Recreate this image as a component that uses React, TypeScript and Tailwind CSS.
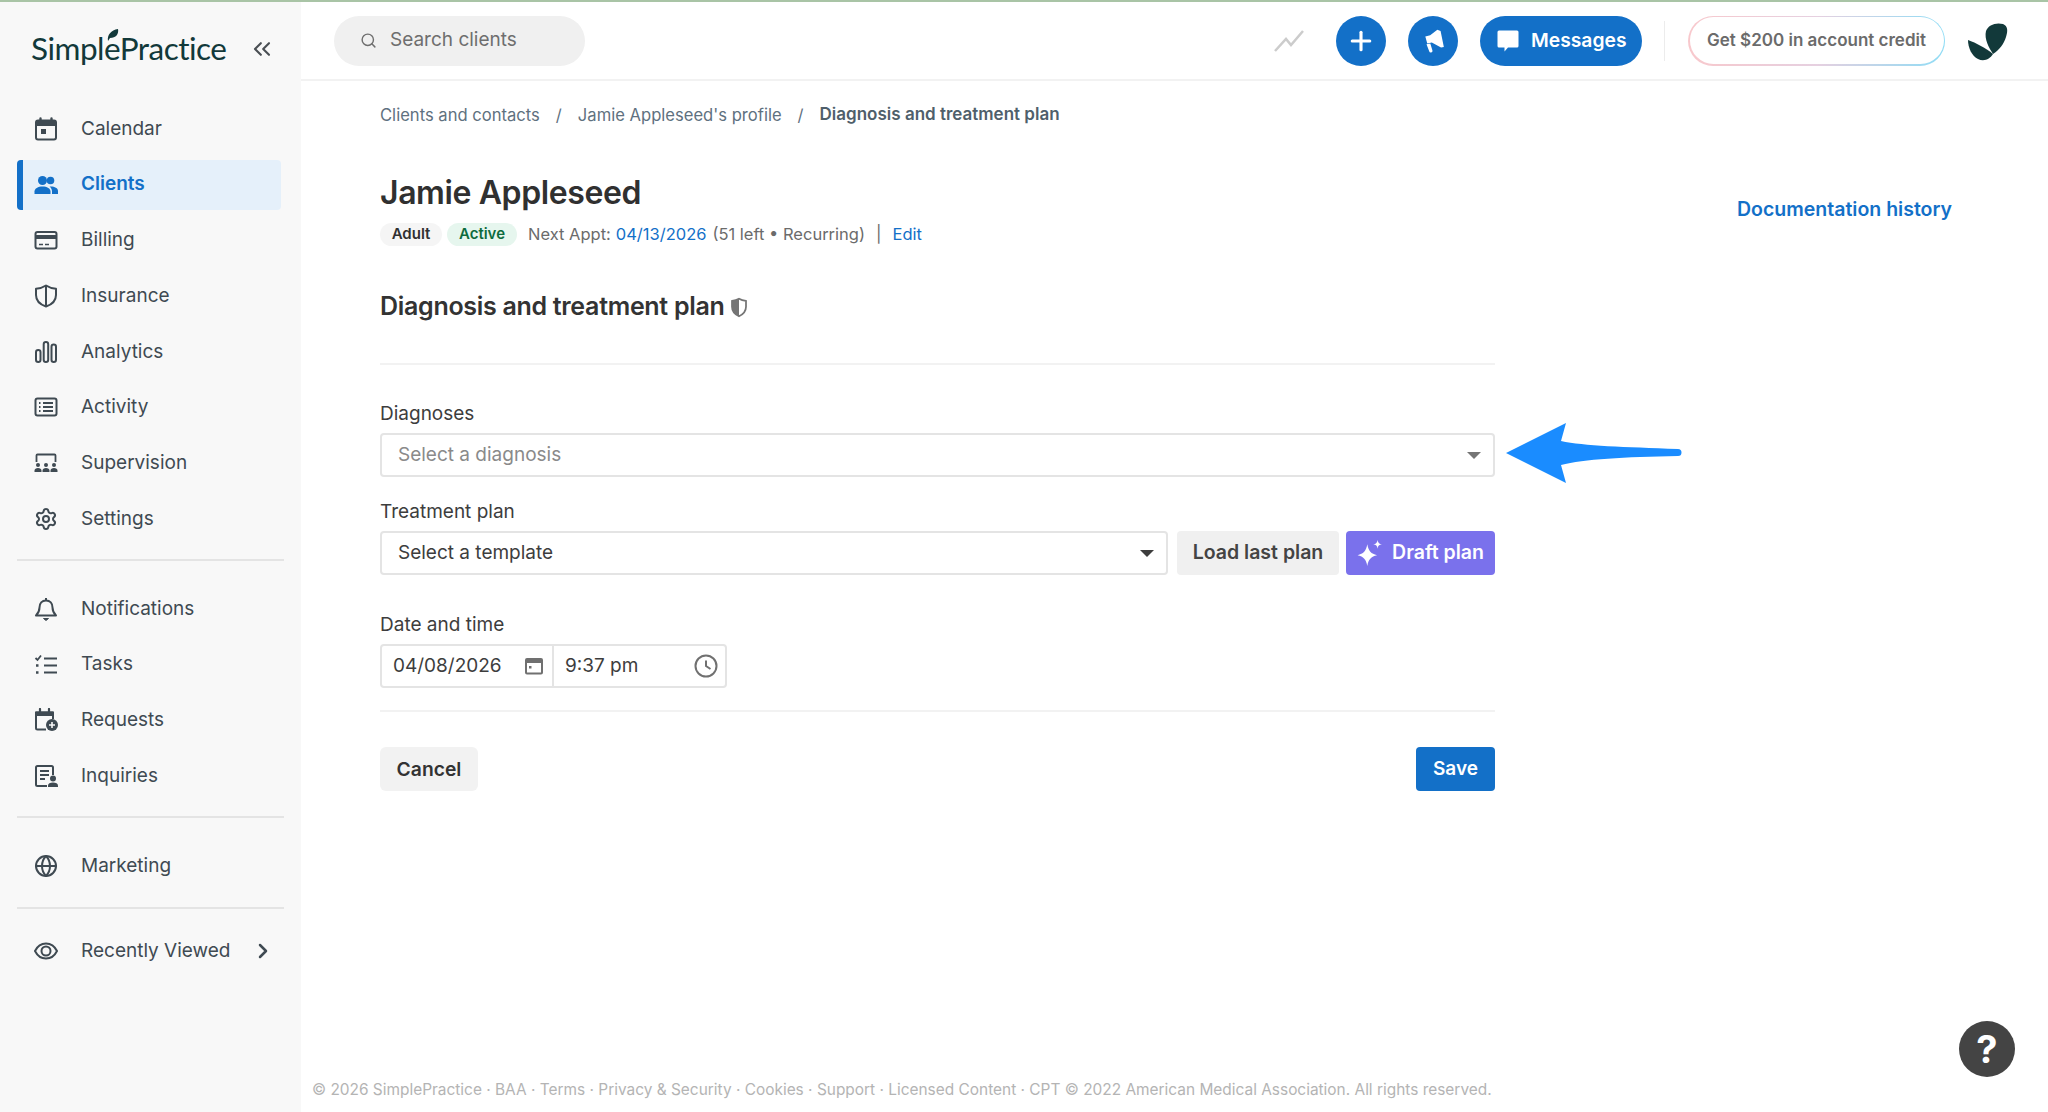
import { ChevronRight, ChevronsLeft, Globe, Plus, Search, Settings } from "lucide-react";
import type { ReactNode } from "react";

{/* SIDEBAR ICONS */}
const CalendarIcon = () => (
  <svg viewBox="0 0 24 24" className="w-[24px] h-[24px]" fill="none">
    <path d="M6.5 1.5v3M17.5 1.5v3" stroke="currentColor" strokeWidth="2.4" strokeLinecap="round" />
    <rect x="2" y="3.5" width="20" height="19" rx="2" stroke="currentColor" strokeWidth="2" />
    <rect x="2" y="3.5" width="20" height="5.5" fill="currentColor" />
    <rect x="7" y="12" width="5" height="5" fill="currentColor" />
  </svg>
);

const ClientsIcon = () => (
  <svg viewBox="0 0 24 24" className="w-[24px] h-[24px]" fill="currentColor">
    <circle cx="8.5" cy="7.5" r="4.5" />
    <circle cx="16.5" cy="7.5" r="3.8" />
    <path d="M0.5 21v-2.5C0.5 15.5 4 13.5 8.5 13.5s8 2 8 5V21z" />
    <path d="M18 21v-2.5c0-2-.9-3.6-2.4-4.900 4.400-.4 8.400 1.400 8.400 4.400V21z" />
  </svg>
);

const BillingIcon = () => (
  <svg viewBox="0 0 24 24" className="w-[24px] h-[24px]" fill="none">
    <rect x="1.500" y="4" width="21" height="16.500" rx="2" stroke="currentColor" strokeWidth="2" />
    <rect x="1.500" y="7" width="21" height="4" fill="currentColor" />
    <path d="M5 16.500h4M11 16.500h4" stroke="currentColor" strokeWidth="1.500" />
  </svg>
);

const InsuranceIcon = () => (
  <svg viewBox="0 0 24 24" className="w-[24px] h-[24px]" fill="none" stroke="currentColor" strokeWidth="2">
    <path d="M12 1.500c3 2 6.500 3 10 3.200V11c0 5.500-4 9.500-10 11.500C6 20.500 2 16.500 2 11V4.700c3.500-.2 7-1.200 10-3.200z" strokeLinejoin="round" />
    <path d="M12 2v20" />
  </svg>
);

const AnalyticsIcon = () => (
  <svg viewBox="0 0 24 24" className="w-[24px] h-[24px]" fill="none" stroke="currentColor" strokeWidth="2">
    <rect x="2" y="10" width="4.500" height="12" rx="2.200" />
    <rect x="9.700" y="2" width="4.500" height="20" rx="2.200" />
    <rect x="17.500" y="4.500" width="4.500" height="17.500" rx="2.200" />
  </svg>
);

const ActivityIcon = () => (
  <svg viewBox="0 0 24 24" className="w-[24px] h-[24px]" fill="none" stroke="currentColor" strokeWidth="2">
    <rect x="1.500" y="3.500" width="21" height="17" rx="2" />
    <path d="M9 8h10M9 12h10M9 16h10" />
    <path d="M5 8h1.500M5 12h1.500M5 16h1.500" strokeWidth="2.200" />
  </svg>
);

const SupervisionIcon = () => (
  <svg viewBox="0 0 24 24" className="w-[24px] h-[24px]" fill="none">
    <path d="M2.500 11V4.500a1 1 0 0 1 1-1h17a1 1 0 0 1 1 1V11" stroke="currentColor" strokeWidth="1.800" />
    <g fill="currentColor">
      <circle cx="4" cy="14" r="2" />
      <circle cx="12" cy="14" r="2" />
      <circle cx="20" cy="14" r="2" />
      <path d="M0.500 21v-1.500c0-1.500 1.500-2.500 3.500-2.500s3.500 1 3.500 2.500V21zM8.500 21v-1.500c0-1.500 1.500-2.500 3.500-2.500s3.500 1 3.500 2.500V21zM16.500 21v-1.500c0-1.500 1.500-2.500 3.500-2.500s3.500 1 3.500 2.500V21z" />
    </g>
  </svg>
);

const BellIcon = () => (
  <svg viewBox="0 0 24 24" className="w-[24px] h-[24px]" fill="none" stroke="currentColor" strokeWidth="2">
    <path d="M12 3.500c-4 0-6.500 3-6.500 7 0 4-1.500 6-3.500 8h20c-2-2-3.500-4-3.500-8 0-4-2.500-7-6.500-7z" strokeLinejoin="round" />
    <path d="M12 1v2.500" />
    <path d="M9.500 21.500h5L12 23.500z" fill="currentColor" strokeWidth="1" />
  </svg>
);

const TasksIcon = () => (
  <svg viewBox="0 0 24 24" className="w-[24px] h-[24px]" fill="none" stroke="currentColor" strokeWidth="2">
    <path d="M1.500 5l2 2 3.500-4.500" strokeWidth="1.800" />
    <path d="M10 5.500h13M10 12.500h13M10 19.500h13" />
    <path d="M2 12.500h2.500M2 19.500h2.500" strokeWidth="2.400" />
  </svg>
);

const RequestsIcon = () => (
  <svg viewBox="0 0 24 24" className="w-[24px] h-[24px]" fill="none">
    <path d="M6 1v3M15 1v3" stroke="currentColor" strokeWidth="2.200" strokeLinecap="round" />
    <path d="M12 21.500H3.500a1.500 1.500 0 0 1-1.500-1.500V4.500h17V11" stroke="currentColor" strokeWidth="2" />
    <rect x="2" y="3.500" width="17" height="4.500" fill="currentColor" />
    <circle cx="18" cy="17" r="6" fill="currentColor" />
    <path d="M18 14v6M15 17h6" stroke="#f8f8f8" strokeWidth="1.600" />
  </svg>
);

const InquiriesIcon = () => (
  <svg viewBox="0 0 24 24" className="w-[24px] h-[24px]" fill="none">
    <path d="M13 22H3.500A1.500 1.500 0 0 1 2 20.500V3.500A1.500 1.500 0 0 1 3.500 2h14A1.500 1.500 0 0 1 19 3.500V11" stroke="currentColor" strokeWidth="2" />
    <path d="M6 7h9M6 11h9M6 15h5" stroke="currentColor" strokeWidth="1.800" />
    <circle cx="19" cy="14.500" r="3" fill="currentColor" />
    <path d="M14 23v-1.500c0-2 2.200-3 5-3s5 1 5 3V23z" fill="currentColor" />
  </svg>
);

const EyeIcon = () => (
  <svg viewBox="0 0 24 24" className="w-[24px] h-[24px]" fill="none" stroke="currentColor" strokeWidth="2">
    <path d="M1 12c2.500-5 6.500-7.500 11-7.500S20.500 7 23 12c-2.500 5-6.500 7.500-11 7.500S3.500 17 1 12z" />
    <circle cx="12" cy="12" r="4.500" />
  </svg>
);

{/* NAV DATA */}
const mainNav: { label: string; icon: ReactNode; active?: boolean }[] = [
  { label: "Calendar", icon: <CalendarIcon /> },
  { label: "Clients", icon: <ClientsIcon />, active: true },
  { label: "Billing", icon: <BillingIcon /> },
  { label: "Insurance", icon: <InsuranceIcon /> },
  { label: "Analytics", icon: <AnalyticsIcon /> },
  { label: "Activity", icon: <ActivityIcon /> },
  { label: "Supervision", icon: <SupervisionIcon /> },
  { label: "Settings", icon: <Settings size={24} strokeWidth={2} /> },
];

const secondNav = [
  { label: "Notifications", icon: <BellIcon /> },
  { label: "Tasks", icon: <TasksIcon /> },
  { label: "Requests", icon: <RequestsIcon /> },
  { label: "Inquiries", icon: <InquiriesIcon /> },
];

const footerLinks = "© 2026 SimplePractice · BAA · Terms · Privacy & Security · Cookies · Support · Licensed Content · CPT © 2022 American Medical Association. All rights reserved.";

function NavItem({ label, icon, active }: { label: string; icon: ReactNode; active?: boolean }) {
  return (
    <a
      className={
        active
          ? "h-[50px] w-[264px] flex items-center rounded-[4px] bg-[#e5f0fa] border-l-[6px] border-[#1370c8] pl-[11px] text-[#1370c8] font-semibold"
          : "h-[50px] w-[264px] flex items-center pl-[17px] text-[#3f4a52]"
      }
    >
      <span className="w-[24px] flex justify-center">{icon}</span>
      <span className="ml-[23px] text-[19px]">{label}</span>
    </a>
  );
}

function Sidebar() {
  return (
    <aside className="w-[301px] h-full shrink-0 bg-[#f8f8f8] flex flex-col pl-[17px]">
      {/* LOGO */}
      <div className="h-[102px] flex items-start pt-[24px]">
        <div className="relative ml-[14px] w-[193px] text-[31.500px] leading-[44px] tracking-[-0.5px] text-[#12393a] font-['Lato',sans-serif]">
          SimplePractice
          <svg viewBox="0 0 14 14" className="absolute left-[74px] top-[2px] w-[14px] h-[14px]">
            <path d="M3 13C2 7 6 2 13 1c1 5-2 9-8 9z" fill="#12393a" />
          </svg>
        </div>
        <ChevronsLeft size={28} strokeWidth={1.800} className="ml-[24px] mt-[9px] text-[#4a4f54]" />
      </div>

      {/* MAIN NAV */}
      <nav className="flex flex-col gap-[5.7px]">
        {mainNav.map((item) => (
          <NavItem key={item.label} {...item} />
        ))}
      </nav>
      <div className="w-[267px] border-t-2 border-[#e4e4e4] mt-[15px] mb-[23px]" />
      <nav className="flex flex-col gap-[5.7px]">
        {secondNav.map((item) => (
          <NavItem key={item.label} {...item} />
        ))}
      </nav>
      <div className="w-[267px] border-t-2 border-[#e4e4e4] mt-[15px] mb-[23px]" />
      <NavItem label="Marketing" icon={<Globe size={24} strokeWidth={2} />} />
      <div className="w-[267px] border-t-2 border-[#e4e4e4] mt-[16px] mb-[17px]" />
      <div className="relative">
        <NavItem label="Recently Viewed" icon={<EyeIcon />} />
        <ChevronRight size={24} strokeWidth={2.500} className="absolute left-[234px] top-[13px] text-[#3f4a52]" />
      </div>
    </aside>
  );
}

function Header() {
  return (
    <header className="h-[79px] shrink-0 border-b-2 border-[#f2f2f2] flex items-center pl-[33px] pr-[40px]">
      <div className="w-[251px] h-[50px] rounded-full bg-[#f0f0f0] flex items-center pl-[26px] text-[#6e6e6e]">
        <Search size={17} strokeWidth={2} />
        <span className="ml-[13px] text-[19px]">Search clients</span>
      </div>
      <div className="ml-auto flex items-center">
        <svg viewBox="0 0 30 24" className="w-[30px] h-[24px] text-[#cccccc] mr-[32px]" fill="none" stroke="currentColor" strokeWidth="2.500">
          <path d="M1 22l11-12 5 6L29 2" />
        </svg>
        <button className="w-[50px] h-[50px] rounded-full bg-[#1370c8] flex items-center justify-center text-white">
          <Plus size={30} strokeWidth={2.500} />
        </button>
        <button className="w-[50px] h-[50px] rounded-full bg-[#1370c8] flex items-center justify-center ml-[22px]">
          <svg viewBox="0 0 24 24" className="w-[26px] h-[26px]" fill="white">
            <path d="M16 1.500l3 1.200 3 14.800-2.600.6-8.500-4.800-4.200 1-1.800-6.500 4.500-1.100z" />
            <path d="M6 15l3.500-.8 2 6.500a1.500 1.500 0 0 1-3 .8z" />
          </svg>
        </button>
        <button className="w-[162px] h-[50px] rounded-full bg-[#1370c8] flex items-center pl-[16px] ml-[22px] text-white text-[19.300px] font-semibold">
          <svg viewBox="0 0 24 24" className="w-[24px] h-[24px] mr-[11px]" fill="white">
            <path d="M3 1.500h18a1.500 1.500 0 0 1 1.500 1.500v14a1.500 1.500 0 0 1-1.500 1.500h-9l-3.500 4v-4H3A1.500 1.500 0 0 1 1.500 17V3A1.500 1.500 0 0 1 3 1.500z" />
          </svg>
          Messages
        </button>
        <div className="w-[1px] h-[40px] bg-[#ececec] ml-[22px] mr-[23px]" />
        <div className="w-[257px] h-[50px] rounded-full p-[1.500px] bg-[linear-gradient(90deg,#f8c8cc,#e6d0e0,#8fdcf5)]">
          <div className="w-full h-full rounded-full bg-white flex items-center justify-center text-[#6b6b6b] text-[17px] font-semibold">
            Get $200 in account credit
          </div>
        </div>
        <svg viewBox="8 10 40 40" className="w-[40px] h-[40px] ml-[23px] text-[#12393a]" fill="currentColor">
          <path d="M26 20C28 14 36 11 43 13C48 15 48 20 46 26C44 33 39 39 33 43C29 37 24 28 26 20z" />
          <path d="M8 29C16 32 26 37 33 43C30 48 24 51 18 48C12 45 8 37 8 29z" />
        </svg>
      </div>
    </header>
  );
}

function SelectBox({ text, muted, className }: { text: string; muted?: boolean; className: string }) {
  return (
    <div className={`${className} h-[44px] rounded-[4px] border-2 border-[#e4e4e4] bg-white flex items-center justify-between pl-[16px] pr-[12px] text-[19px] ${muted ? "text-[#8a8a8a]" : "text-[#3d3d3d]"}`}>
      <span>{text}</span>
      <span className={`w-0 h-0 border-x-[7px] border-x-transparent border-t-[7px] ${muted ? "border-t-[#757575]" : "border-t-[#3d3d3d]"}`} />
    </div>
  );
}

function Content() {
  return (
    <main className="flex-1 flex flex-col relative">
      <div className="w-[1115px] ml-[79px]">
        {/* BREADCRUMB */}
        <div className="h-[28px] mt-[20px] flex items-center text-[16.600px] text-[#5f7180]">
          <span>Clients and contacts</span>
          <span className="mx-[16px]">/</span>
          <span>Jamie Appleseed's profile</span>
          <span className="mx-[16px]">/</span>
          <span className="font-semibold text-[17px] text-[#4f5f6b]">Diagnosis and treatment plan</span>
        </div>

        {/* CLIENT HEADER */}
        <div className="flex items-center mt-[43px] h-[42px]">
          <h1 className="text-[32px] font-semibold text-[#303030] tracking-[-0.4px]">Jamie Appleseed</h1>
        </div>
        <div className="mt-[9px] h-[23px] flex items-center text-[16.500px] text-[#6b6b6b]">
          <span className="h-[23px] w-[62px] rounded-full bg-[#f5f5f5] flex items-center justify-center text-[#303030] font-semibold text-[15px]">Adult</span>
          <span className="h-[23px] w-[70px] ml-[5px] rounded-full bg-[#e6f6ee] flex items-center justify-center text-[#0d6b3d] font-semibold text-[15px]">Active</span>
          <span className="ml-[11px]">Next Appt: </span>
          <span className="ml-[5px] text-[#1370c8]">04/13/2026</span>
          <span className="ml-[6px]">(51 left • Recurring)</span>
          <span className="mx-[11px]">|</span>
          <span className="text-[#1370c8]">Edit</span>
        </div>

        {/* SECTION TITLE */}
        <div className="mt-[45px] h-[32px] flex items-center">
          <h2 className="text-[25px] font-semibold text-[#333333] tracking-[-0.3px]">Diagnosis and treatment plan</h2>
          <svg viewBox="0 0 20 24" className="w-[18px] h-[21px] ml-[6px]" fill="none">
            <path d="M10 2c2.500 1.500 5 2.200 8 2.500V11c0 5-3 8.500-8 11-5-2.500-8-6-8-11V4.500c3-.3 5.500-1 8-2.500z" stroke="#757575" strokeWidth="2" />
            <path d="M10 2c-2.500 1.500-5 2.200-8 2.500V11c0 5 3 8.500 8 11z" fill="#757575" />
          </svg>
        </div>
        <div className="border-t-2 border-[#f2f2f2] mt-[40px]" />

        {/* DIAGNOSES */}
        <div className="mt-[36px] text-[19px] leading-[26px] text-[#3d3d3d]">Diagnoses</div>
        <SelectBox text="Select a diagnosis" muted className="mt-[6px] w-full" />

        {/* TREATMENT PLAN */}
        <div className="mt-[22px] text-[19px] leading-[26px] text-[#3d3d3d]">Treatment plan</div>
        <div className="mt-[6px] flex">
          <SelectBox text="Select a template" className="w-[788px]" />
          <button className="ml-[9px] w-[162px] h-[44px] rounded-[4px] bg-[#f0f0f0] text-[19.500px] font-semibold text-[#444444]">Load last plan</button>
          <button className="ml-[7px] w-[149px] h-[44px] rounded-[4px] bg-[#7a71ec] text-white text-[19.500px] font-semibold flex items-center justify-center">
            <svg viewBox="0 0 24 24" className="w-[26px] h-[26px] mr-[9px]" fill="white">
              <path d="M9.500 4c1 6 3.500 9 9 10-5.500 1-8 4-9 10-1-6-3.500-9-9-10 5.500-1 8-4 9-10z" />
              <path d="M19 0c.4 2.700 1.300 3.600 4 4-2.700.4-3.600 1.300-4 4-.4-2.700-1.300-3.600-4-4 2.700-.4 3.600-1.300 4-4z" />
            </svg>
            Draft plan
          </button>
        </div>

        {/* DATE AND TIME */}
        <div className="mt-[37px] text-[19px] leading-[26px] text-[#3d3d3d]">Date and time</div>
        <div className="mt-[6px] w-[347px] h-[44px] rounded-[4px] border-2 border-[#e4e4e4] flex items-center text-[19px] text-[#3d3d3d]">
          <div className="w-[172px] h-full flex items-center justify-between pl-[11px] pr-[9px] border-r-2 border-[#e4e4e4]">
            <span>04/08/2026</span>
            <svg viewBox="0 0 18 18" className="w-[18px] h-[18px]" fill="none">
              <rect x="1" y="2" width="16" height="14.500" rx="1" stroke="#707070" strokeWidth="2" />
              <rect x="1" y="2" width="16" height="4" fill="#707070" />
              <rect x="4" y="9" width="2.500" height="2.500" fill="#707070" />
            </svg>
          </div>
          <div className="flex-1 h-full flex items-center justify-between pl-[11px] pr-[7px]">
            <span>9:37 pm</span>
            <svg viewBox="0 0 24 24" className="w-[24px] h-[24px]" fill="none" stroke="#707070" strokeWidth="2">
              <circle cx="12" cy="12" r="10.500" />
              <path d="M12 6.500V12l4.500 3" />
            </svg>
          </div>
        </div>
        <div className="border-t-2 border-[#f2f2f2] mt-[22px]" />

        {/* ACTIONS */}
        <div className="mt-[35px] flex justify-between">
          <button className="w-[98px] h-[44px] rounded-[6px] bg-[#f2f2f2] text-[19.300px] font-semibold text-[#333333]">Cancel</button>
          <button className="w-[79px] h-[44px] rounded-[4px] bg-[#1370c8] text-[19px] font-semibold text-white">Save</button>
        </div>
      </div>

      {/* DOCUMENTATION LINK AND ARROW, OVER THE PAGE */}
      <a className="absolute left-[1436px] top-[114px] text-[19.500px] font-semibold text-[#1370c8]">Documentation history</a>
      <svg viewBox="0 0 180 62" className="absolute left-[1203px] top-[341px] w-[180px] h-[62px]">
        <path d="M2 31L62 1 57 19C80 24 120 25 174 27a3.500 3.500 0 0 1 0 7C120 35 80 37 57 43L62 61z" fill="#1a8cff" />
      </svg>

      {/* FOOTER */}
      <footer className="mt-auto mb-[12px] ml-[11px] text-[15.430px] leading-[20px] text-[#b4b4b4]">{footerLinks}</footer>

      <button className="absolute left-[1658px] top-[940px] w-[56px] h-[56px] rounded-full bg-[#444444] flex items-center justify-center text-white text-[38px] font-bold">?</button>
    </main>
  );
}

export default function App() {
  return (
    <div className="w-[2048px] h-[1112px] overflow-hidden bg-white border-t-2 border-[#a9c4a6] flex font-['Inter',sans-serif]">
      <Sidebar />
      <div className="flex-1 flex flex-col">
        <Header />
        <Content />
      </div>
    </div>
  );
}
